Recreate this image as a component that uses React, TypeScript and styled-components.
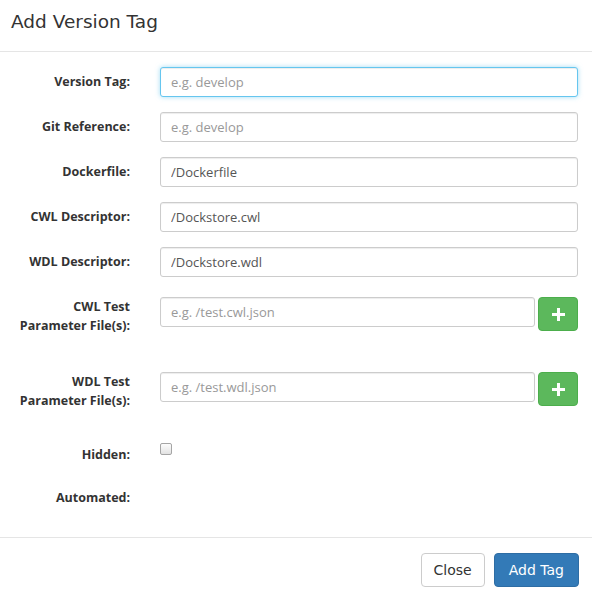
import styled, { createGlobalStyle } from "styled-components";

const GlobalStyle = createGlobalStyle`
  html, body {
    margin: 0;
    padding: 0;
    background: #fff;
  }
  body {
    font-family: "DejaVu Sans", "Open Sans", sans-serif;
    color: #333;
  }
  * {
    box-sizing: border-box;
  }
`;

const Modal = styled.div`
  width: 592px;
  height: 598px;
  background: #fff;
  display: flex;
  flex-direction: column;
  overflow: hidden;
`;

const Header = styled.div`
  flex: 0 0 52px;
  padding: 0 11px;
  display: flex;
  align-items: center;
  border-bottom: 1px solid #e5e5e5;
`;

const Title = styled.h4`
  margin: 0 0 8px;
  font-size: 18.5px;
  font-weight: 400;
  color: #333;
`;

const Body = styled.div`
  flex: 0 0 486px;
  padding: 15px 14px 0 0;
  border-bottom: 1px solid #e5e5e5;
`;

const Row = styled.div<{ $height?: number }>`
  display: flex;
  align-items: flex-start;
  gap: 30px;
  margin-bottom: 15px;
  min-height: ${(p) => p.$height ?? 30}px;
`;

const Label = styled.label<{ $top?: number }>`
  flex: 0 0 130px;
  text-align: right;
  font-family: "Open Sans", "DejaVu Sans", sans-serif;
  font-size: 12.5px;
  font-weight: 700;
  line-height: 18.5px;
  padding-top: ${(p) => p.$top ?? 6}px;
  color: #333;
`;

const Field = styled.div<{ $offset?: number }>`
  flex: 1;
  display: flex;
  gap: 3px;
  margin-top: ${(p) => p.$offset ?? 0}px;
`;

const Input = styled.input<{ $focus?: boolean }>`
  flex: 1;
  min-width: 0;
  height: 30px;
  padding: 0 10px;
  font-family: "Open Sans", "Liberation Sans", sans-serif;
  font-size: 13px;
  color: #555;
  border: 1px solid ${(p) => (p.$focus ? "#66c6ef" : "#ccc")};
  border-radius: 3px;
  box-shadow: ${(p) =>
    p.$focus
      ? "inset 0 1px 1px rgba(0,0,0,.075), 0 0 5px rgba(102,198,239,.6)"
      : "inset 0 1px 1px rgba(0,0,0,.075)"};
  outline: none;
  &::placeholder {
    color: #999;
  }
`;

const AddButton = styled.button`
  flex: 0 0 40px;
  height: 34px;
  border: 1px solid #4cae4c;
  border-radius: 4px;
  background: #5cb85c;
  display: flex;
  align-items: center;
  justify-content: center;
  padding: 0;
`;

const Checkbox = styled.span`
  display: block;
  width: 12px;
  height: 12px;
  margin-top: 1px;
  border: 1px solid #a5a5a5;
  border-radius: 2px;
  background: linear-gradient(#fcfcfc, #e2e2e2);
`;

const Footer = styled.div`
  display: flex;
  justify-content: flex-end;
  gap: 9px;
  padding: 15px 13px;
`;

const Button = styled.button<{ $primary?: boolean }>`
  height: 34px;
  padding: 0 ${(p) => (p.$primary ? 14 : 12)}px;
  font-family: "DejaVu Sans", "Open Sans", sans-serif;
  font-size: 14px;
  border-radius: 4px;
  border: 1px solid ${(p) => (p.$primary ? "#2e6da4" : "#ccc")};
  background: ${(p) => (p.$primary ? "#337ab7" : "#fff")};
  color: ${(p) => (p.$primary ? "#fff" : "#333")};
`;

function Plus() {
  return (
    <svg width="13" height="13" viewBox="0 0 13 13">
      <path d="M5 0h3v5h5v3H8v5H5V8H0V5h5z" fill="#fff" />
    </svg>
  );
}

const textRows = [
  { label: "Version Tag:", placeholder: "e.g. develop", value: "", focus: true },
  { label: "Git Reference:", placeholder: "e.g. develop", value: "" },
  { label: "Dockerfile:", placeholder: "", value: "/Dockerfile" },
  { label: "CWL Descriptor:", placeholder: "", value: "/Dockstore.cwl" },
  { label: "WDL Descriptor:", placeholder: "", value: "/Dockstore.wdl" },
];

const testRows = [
  { lang: "CWL", placeholder: "e.g. /test.cwl.json" },
  { lang: "WDL", placeholder: "e.g. /test.wdl.json" },
];

export default function App() {
  return (
    <>
      <GlobalStyle />
      <Modal>
        <Header>
          <Title>Add Version Tag</Title>
        </Header>
        <Body>
          {textRows.map((r) => (
            <Row key={r.label}>
              <Label>{r.label}</Label>
              <Field>
                <Input
                  $focus={r.focus}
                  placeholder={r.placeholder}
                  defaultValue={r.value}
                />
              </Field>
            </Row>
          ))}
          {testRows.map((r) => (
            <Row key={r.lang} $height={60}>
              <Label>
                {r.lang} Test
                <br />
                Parameter File(s):
              </Label>
              <Field $offset={5}>
                <Input placeholder={r.placeholder} />
                <AddButton>
                  <Plus />
                </AddButton>
              </Field>
            </Row>
          ))}
          <Row $height={26}>
            <Label $top={4}>Hidden:</Label>
            <Field>
              <Checkbox />
            </Field>
          </Row>
          <Row>
            <Label>Automated:</Label>
          </Row>
        </Body>
        <Footer>
          <Button>Close</Button>
          <Button $primary>Add Tag</Button>
        </Footer>
      </Modal>
    </>
  );
}
